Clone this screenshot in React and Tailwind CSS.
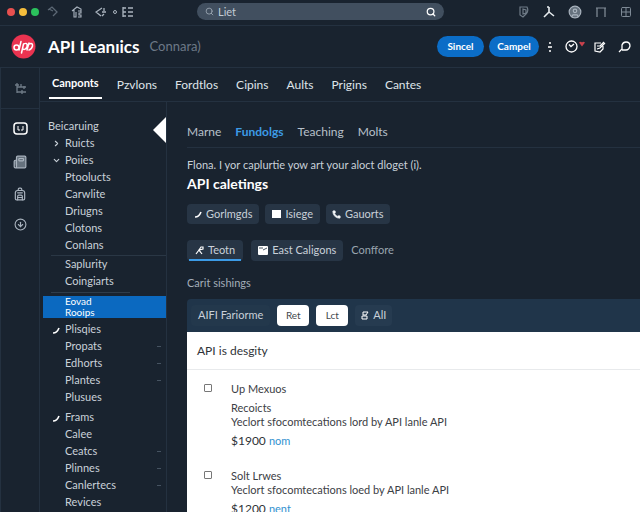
import { Search, CircleUser, Newspaper, Backpack, CircleArrowDown, ChevronRight, ChevronDown, Phone, Grid2x2 } from "lucide-react";

const NAV = ["Canponts", "Pzvlons", "Fordtlos", "Cipins", "Aults", "Prigins", "Cantes"];
const TABS = ["Marne", "Fundolgs", "Teaching", "Molts"];

function TitleBar() {
  return (
    <div className="flex h-[26px] shrink-0 items-center border-b border-[#243140] pb-[2px] text-[#aab4bf]">
      <div className="flex w-[197px] shrink-0 items-center pl-[7px]">
        <div className="flex gap-1">
          <span className="size-2 rounded-full bg-[#e8504f]" />
          <span className="size-2 rounded-full bg-[#f5bd3c]" />
          <span className="size-2 rounded-full bg-[#2bc15c]" />
        </div>
        <button aria-label="Undo" className="ml-2 text-[#5c6875]">
          <svg width="12" height="12" viewBox="0 0 12 12" fill="none" stroke="currentColor" strokeWidth="1.3">
            <path d="M1 4 5 1l5 5-4 4M2 3l4 2" />
          </svg>
        </button>
        <button aria-label="Home" className="ml-3">
          <svg width="12" height="12" viewBox="0 0 12 12" fill="none" stroke="currentColor" strokeWidth="1.1">
            <path d="M1 5 6 1l4 2v2M3 4v7h2V6M7 5h3v2H8v2h2v2H7" />
          </svg>
        </button>
        <button aria-label="Back" className="ml-3">
          <svg width="12" height="12" viewBox="0 0 12 12" fill="none" stroke="currentColor" strokeWidth="1.3">
            <path d="M7 2 1 6l5 4M9 2v3M7 6h4M7 10l2-2" />
          </svg>
        </button>
        <span className="ml-[6px] size-1 rounded-full border border-[#aab4bf]" />
        <button aria-label="Outline" className="ml-[5px]">
          <svg width="12" height="12" viewBox="0 0 12 12" fill="none" stroke="currentColor" strokeWidth="1.3">
            <path d="M1 1v10M1 2h3M1 6h3M1 10h3M6 2h5M6 6h5M6 10h5" />
          </svg>
        </button>
      </div>
      <label className="flex h-[17px] w-[247px] items-center gap-1 rounded-full bg-[#414f5f] px-2">
        <Search size={9} />
        <input
          aria-label="Search"
          defaultValue="Liet"
          className="min-w-0 flex-1 bg-transparent text-[11px] leading-3 text-[#c3ccd5] outline-none"
        />
        <Search size={10} strokeWidth={3} className="text-white" />
      </label>
      <div className="ml-auto flex items-center gap-[13px] pr-2">
        <svg width="12" height="12" viewBox="0 0 12 12" fill="none" stroke="#6f7b87" strokeWidth="1.2">
          <path d="M2 1h7q2 4-1 7l-3 3-3-2zM5 3v5l3-1V4z" />
        </svg>
        <svg width="12" height="12" viewBox="0 0 12 12" fill="none" stroke="#e6ebef" strokeWidth="1.6">
          <path d="M6 1v5M6 6l-5 5M6 6l5 4M4 1h2" />
        </svg>
        <CircleUser size={14} fill="#66727e" />
        <svg width="12" height="12" viewBox="0 0 12 12" fill="none" stroke="#85909b" strokeWidth="1.2">
          <path d="M1 2h10M2 2v9M10 2v9" />
        </svg>
        <Grid2x2 size={12} className="text-[#7e8a96]" />
      </div>
    </div>
  );
}

function Header() {
  return (
    <header className="flex h-[42px] shrink-0 items-center border-b border-[#243140] pr-[9px] pl-[11px]">
      <svg width="25" height="25" viewBox="0 0 50 50" className="shrink-0" role="img" aria-label="Logo">
        <circle cx="25" cy="25" r="24" fill="#ea3350" />
        <g fill="none" stroke="#fff" strokeWidth="3" strokeLinecap="round">
          <circle cx="11" cy="27" r="5" />
          <path d="M20 15 16 32M25 20l-4 18M25 20q9-4 7 5-3 8-9 5M36 18l-4 14M36 20q8-3 7 4-2 7-7 8" />
        </g>
      </svg>
      <h1 className="ml-3 text-[17px] leading-6 font-bold text-white">API Leanıics</h1>
      <span className="ml-[10px] text-[13px] text-[#6d7987]">Connara)</span>
      <div className="ml-auto flex items-center">
        <button className="h-[21px] w-[47px] rounded-full bg-[#0b6dc7] text-[10px] font-bold text-white">Sincel</button>
        <button className="ml-[5px] h-[21px] w-[50px] rounded-full bg-[#0b6dc7] text-[10px] font-bold text-white">Campel</button>
        <button aria-label="More" className="ml-2 text-white">
          <svg width="6" height="12" viewBox="0 0 6 12" fill="none" stroke="currentColor" strokeWidth="1.5">
            <path d="M2 2h2M1 6h4M2 10h2" />
          </svg>
        </button>
        <button aria-label="History" className="ml-3 flex text-white">
          <svg width="21" height="13" viewBox="0 0 42 26" fill="none" stroke="currentColor" strokeWidth="2.6">
            <circle cx="13" cy="13" r="11" />
            <path d="m8 9 4 4 6-5" />
            <path d="M28 5q4-3 6 0 2-3 6 0l-6 8z" fill="#c9414c" stroke="none" />
          </svg>
        </button>
        <button aria-label="Edit" className="ml-[7px] text-white">
          <svg width="13" height="12" viewBox="0 0 13 12" fill="none" stroke="currentColor" strokeWidth="1.2">
            <path d="M8 2H2v8l5 1 3-3V5M4 5h3l4-4M4 8l3-1 5-5" />
          </svg>
        </button>
        <button aria-label="Comment" className="ml-3 text-white">
          <svg width="13" height="12" viewBox="0 0 13 12" fill="none" stroke="currentColor" strokeWidth="1.3">
            <path d="M1 11 4 8V4q1-3 4-3 4 0 4 4-1 4-4 4H4" />
          </svg>
        </button>
      </div>
    </header>
  );
}

function Rail() {
  return (
    <div className="flex w-10 shrink-0 flex-col items-center border-r border-l border-[#243140] text-[#aab4bf]">
      <button aria-label="Structure" className="flex h-[41px] w-full items-center justify-center border-b border-[#243140] text-[#6f7b87]">
        <svg width="13" height="13" viewBox="0 0 13 13" fill="none" stroke="currentColor" strokeWidth="1.3">
          <path d="M3 1v10M1 3h4M3 5h9M7 2v3M3 10h9M8 8v4M10 4v3" />
        </svg>
      </button>
      <button aria-label="Board" className="mt-[13px] text-white">
        <svg width="15" height="13" viewBox="0 0 15 13" fill="none" stroke="currentColor" strokeWidth="1.5">
          <rect x="1" y="1" width="13" height="11" rx="3" />
          <path d="M5 4v4h2M10 4v4H8" strokeWidth="1" />
        </svg>
      </button>
      <button aria-label="News" className="mt-5"><Newspaper size={14} fill="#66727e" /></button>
      <button aria-label="Storage" className="mt-[18px]"><Backpack size={14} /></button>
      <button aria-label="Downloads" className="mt-[17px]"><CircleArrowDown size={13} /></button>
    </div>
  );
}

function Item({ label, icon, more }) {
  return (
    <li>
      <a href="#" className="flex h-[17px] items-center pr-[5px]">
        <span className="flex w-[25px] shrink-0 justify-center pl-[7px]">{icon}</span>
        <span className="flex-1">{label}</span>
        {more && <span className="h-px w-1 bg-[#465361]" />}
      </a>
    </li>
  );
}

function Tick() {
  return (
    <svg width="8" height="8" viewBox="0 0 8 8" fill="none" stroke="#fff" strokeWidth="1.6">
      <path d="M1 7q4 0 6-5" />
    </svg>
  );
}

function Sidebar() {
  return (
    <aside className="w-[127px] shrink-0 overflow-hidden border-r border-[#243140] pt-[15px] text-[11px] text-[#c9d1d9]">
      <div className="relative pl-2">
        <h2 className="h-[17px] leading-[17px]">Beicaruing</h2>
        <svg width="13" height="26" viewBox="0 0 13 26" className="absolute top-0 right-0">
          <path d="M13 0v26L0 13z" fill="#fff" />
        </svg>
      </div>
      <ul className="mt-px">
        <Item label="Ruicts" icon={<ChevronRight size={9} strokeWidth={3} />} />
        <Item label="Poiies" icon={<ChevronDown size={9} strokeWidth={3} />} />
        <Item label="Ptoolucts" />
        <Item label="Carwlite" />
        <Item label="Driugns" />
        <Item label="Clotons" />
        <Item label="Conlans" />
      </ul>
      <hr className="mt-px ml-[11px] border-[#2a3745]" />
      <ul>
        <Item label="Saplurity" />
        <Item label="Coingiarts" />
      </ul>
      <hr className="mt-[2px] mr-9 ml-[11px] border-[#2f3c4a]" />
      <a href="#" className="mt-[3px] ml-[3px] flex h-[22px] flex-col justify-center bg-[#0b69c0] pl-[22px] text-[10px] leading-[11px] text-white">
        <span>Eovad</span>
        <span>Rooips</span>
      </a>
      <ul className="mt-[3px]">
        <Item label="Plisqies" icon={<Tick />} />
        <Item label="Propats" more />
        <Item label="Edhorts" more />
        <Item label="Plantes" more />
        <Item label="Plusues" />
      </ul>
      <ul className="mt-[3px]">
        <Item label="Frams" icon={<Tick />} />
        <Item label="Calee" />
        <Item label="Ceatcs" more />
        <Item label="Plinnes" more />
        <Item label="Canlertecs" more />
        <Item label="Revices" />
      </ul>
    </aside>
  );
}

function Product({ title, extra, detail, price, unit, id }) {
  return (
    <div className="flex gap-[19px] pl-[17px]">
      <input id={id} type="checkbox" className="mt-[2px] size-2 shrink-0 appearance-none rounded-[1px] border border-[#777]" />
      <div className="text-[11px] leading-[14px] text-[#3c4045]">
        <label htmlFor={id} className="block">{title}</label>
        {extra && <p className="mt-[5px]">{extra}</p>}
        <p>{detail}</p>
        <p className="mt-1 text-xs leading-4 text-[#2f3338]">
          {price} <a href="#" className="text-[11px] text-[#3292d0]">{unit}</a>
        </p>
      </div>
    </div>
  );
}

export default function App() {
  return (
    <div className="flex h-screen flex-col overflow-hidden bg-[#19232f] font-[Lato,'Open_Sans',sans-serif] text-[#c9d1d9]">
      <TitleBar />
      <Header />
      <div className="flex min-h-0 flex-1">
        <Rail />
        <div className="flex min-w-0 flex-1 flex-col">
          <nav className="flex h-[34px] shrink-0 gap-3 border-b border-[#243140] pl-[9px] text-xs">
            {NAV.map((n, i) => (
              <a
                key={n}
                href="#"
                className={
                  i === 0
                    ? "mb-[2px] flex items-center border-b-2 border-white px-[3px] pt-[2px] text-[11px] font-bold text-white"
                    : "flex items-center px-[3px] text-[#dfe4e9]"
                }
              >
                {n}
              </a>
            ))}
          </nav>
          <div className="flex min-h-0 flex-1">
            <Sidebar />
            <main className="min-w-0 flex-1 overflow-hidden pt-[15px] pl-5">
              <div className="flex h-[31px] items-center gap-[14px] border-b border-[#243140] text-xs">
                {TABS.map((t, i) => (
                  <a key={t} href="#" className={i === 1 ? "font-bold text-[#3c9be6]" : "text-[#b7c0ca]"}>{t}</a>
                ))}
              </div>
              <p className="mt-[9px] text-[11px] leading-4">Flona. I yor caplurtie yow art your aloct dloget (i).</p>
              <h2 className="mt-px text-sm leading-5 font-bold text-white">API caletings</h2>
              <div className="mt-[10px] flex gap-[6px] text-[11px]">
                <button className="flex h-5 items-center gap-1 rounded bg-[#273545] px-[7px]"><Tick />Gorlmgds</button>
                <button className="flex h-5 items-center gap-1 rounded bg-[#273545] px-[7px]">
                  <span className="h-2 w-[9px] bg-white" />Isiege
                </button>
                <button className="flex h-5 items-center gap-1 rounded bg-[#273545] px-[6px]"><Phone size={9} fill="#fff" />Gauorts</button>
              </div>
              <div className="mt-4 flex items-center gap-2 text-[11px]">
                <button className="relative flex h-[21px] items-center gap-1 rounded bg-[#273545] px-2 after:absolute after:inset-x-[2px] after:bottom-0 after:h-[2px] after:bg-[#3c9be6]">
                  <svg width="9" height="9" viewBox="0 0 9 9" fill="none" stroke="#fff" strokeWidth="1.2">
                    <path d="M1 8l3-4 2-3h2v2L4 4l3 4" />
                  </svg>
                  Teotn
                </button>
                <button className="flex h-[21px] items-center gap-1 rounded bg-[#273545] px-[7px]">
                  <svg width="10" height="9" viewBox="0 0 10 9">
                    <rect width="10" height="9" rx="1" fill="#fff" />
                    <path d="M1 2h4M5 4l4-2" stroke="#4a5867" />
                  </svg>
                  East Caligons
                </button>
                <button className="text-[#9aa5b0]">Conffore</button>
              </div>
              <p className="mt-[14px] text-[11px] leading-4 text-[#a3adb8]">Carit sishings</p>
              <section>
                <div className="mt-2 flex h-[33px] items-center gap-[7px] rounded-tl bg-[#20354a] pl-1 text-[11px]">
                  <button className="h-[21px] rounded bg-[#23384c] px-[7px]">AIFI Fariorme</button>
                  <button className="h-[21px] w-8 rounded bg-white text-[10px] text-[#44484d]">Ret</button>
                  <button className="h-[21px] w-8 rounded bg-white text-[10px] text-[#44484d]">Lct</button>
                  <button className="flex h-[21px] items-center gap-1 rounded bg-[#263b50] px-[6px]">
                    <svg width="8" height="9" viewBox="0 0 8 9" fill="none" stroke="#fff" strokeWidth="1">
                      <path d="M2 1h5L5 4H2zM1 5h5v3H1z" />
                    </svg>
                    AlI
                  </button>
                </div>
                <div className="bg-white">
                  <h3 className="flex h-[38px] items-center border-b border-[#e8eaec] pl-[10px] text-xs text-[#2f3338]">API is desgity</h3>
                  <div className="flex flex-col gap-5 pt-3">
                    <Product id="first" title="Up Mexuos" extra="Recoicts" detail="Yeclort sfocomtecations lord by API lanle API" price="$1900" unit="nom" />
                    <Product id="second" title="Solt Lrwes" detail="Yeclort sfocomtecations loed by API lanle API" price="$1200" unit="nent" />
                  </div>
                </div>
              </section>
            </main>
          </div>
        </div>
      </div>
    </div>
  );
}
